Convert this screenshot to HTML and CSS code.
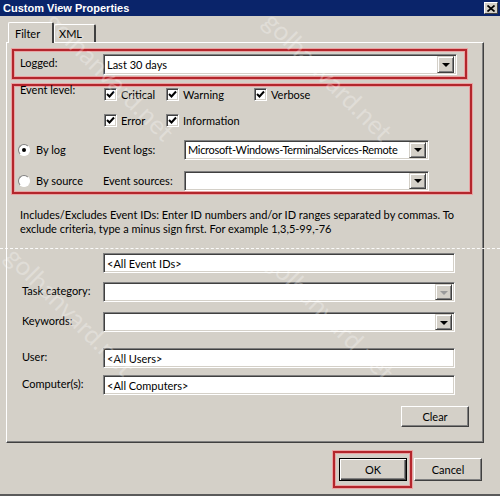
FILE: index.html
```html
<!DOCTYPE html>
<html>
<head>
<meta charset="utf-8">
<link rel="stylesheet" href="styles.css">
</head>
<body>
<div class="window">
  <div class="titlebar">
    <span class="title">Custom View Properties</span>
    <span class="close"><svg width="8" height="7" viewBox="0 0 8 7"><path d="M0.5 0.5 L7.5 6.5 M7.5 0.5 L0.5 6.5" stroke="#000" stroke-width="1.7"/></svg></span>
  </div>
  <div class="tabs">
    <div class="tab active">Filter</div>
    <div class="tab">XML</div>
  </div>
  <div class="panel">
    <div class="redbox logged">
      <span class="lbl-logged">Logged:</span>
      <div class="field combo w-logged"><span class="val">Last 30 days</span><span class="dd"><i class="tri"></i></span></div>
    </div>
    <div class="redbox events">
      <div class="erow">
        <span class="elabel">Event level:</span>
        <span class="chk w62"><span class="box"><svg width="9" height="9" viewBox="0 0 9 9"><path d="M1 4 L3.5 6.5 L8 1.5" fill="none" stroke="#000" stroke-width="2"/></svg></span>Critical</span>
        <span class="chk w88"><span class="box"><svg width="9" height="9" viewBox="0 0 9 9"><path d="M1 4 L3.5 6.5 L8 1.5" fill="none" stroke="#000" stroke-width="2"/></svg></span>Warning</span>
        <span class="chk"><span class="box"><svg width="9" height="9" viewBox="0 0 9 9"><path d="M1 4 L3.5 6.5 L8 1.5" fill="none" stroke="#000" stroke-width="2"/></svg></span>Verbose</span>
      </div>
      <div class="erow r2">
        <span class="elabel"></span>
        <span class="chk w62"><span class="box"><svg width="9" height="9" viewBox="0 0 9 9"><path d="M1 4 L3.5 6.5 L8 1.5" fill="none" stroke="#000" stroke-width="2"/></svg></span>Error</span>
        <span class="chk"><span class="box"><svg width="9" height="9" viewBox="0 0 9 9"><path d="M1 4 L3.5 6.5 L8 1.5" fill="none" stroke="#000" stroke-width="2"/></svg></span>Information</span>
      </div>
      <div class="lrow r3">
        <span class="radio-item"><span class="radio on"></span>By log</span>
        <span class="slabel">Event logs:</span>
        <div class="field combo w-log"><span class="val tight">Microsoft-Windows-TerminalServices-Remote</span><span class="dd"><i class="tri"></i></span></div>
      </div>
      <div class="lrow r4">
        <span class="radio-item"><span class="radio"></span>By source</span>
        <span class="slabel">Event sources:</span>
        <div class="field combo w-log"><span class="val"></span><span class="dd"><i class="tri"></i></span></div>
      </div>
    </div>
    <p class="help">Includes/Excludes Event IDs: Enter ID numbers and/or ID ranges separated by commas. To<br>exclude criteria, type a minus sign first. For example 1,3,5-99,-76</p>
    <div class="frow ids"><span class="flabel"></span><div class="field w-f"><span class="val">&lt;All Event IDs&gt;</span></div></div>
    <div class="frow task"><span class="flabel">Task category:</span><div class="field combo w-f"><span class="val"></span><span class="dd"><i class="tri dis"></i></span></div></div>
    <div class="frow kw"><span class="flabel">Keywords:</span><div class="field combo w-f"><span class="val"></span><span class="dd"><i class="tri"></i></span></div></div>
    <div class="frow user"><span class="flabel">User:</span><div class="field w-f"><span class="val">&lt;All Users&gt;</span></div></div>
    <div class="frow comp"><span class="flabel">Computer(s):</span><div class="field w-f"><span class="val">&lt;All Computers&gt;</span></div></div>
    <div class="clear-row"><span class="btn clear">Clear</span></div>
  </div>
  <div class="footer">
    <div class="okbox"><span class="btn ok">OK</span></div>
    <span class="btn cancel">Cancel</span>
  </div>
  <div class="dashline"></div>
  <div class="wm wm1">golhanvard.net</div>
  <div class="wm wm2">golhanvard.net</div>
  <div class="wm wm3">golhanvard.net</div>
  <div class="wm wm4">golhanvard.net</div>
</div>
</body>
</html>
```
FILE: styles.css
```css
html, body { margin: 0; padding: 0; }
body { width: 500px; height: 496px; overflow: hidden; background: #d4d0c8; }
.window {
  position: relative;
  width: 500px; height: 496px;
  box-sizing: border-box;
  background: #d4d0c8;
  border-bottom: 2px solid #5a5a5a;
  overflow: hidden;
  font-family: "Lato", "Open Sans", sans-serif;
  font-size: 11px;
  color: #000;
}
.titlebar {
  height: 16px;
  background: #0a246a;
  display: flex; align-items: center; justify-content: space-between;
  padding: 0 2px 0 3px;
}
.title { font-family: "Liberation Sans", sans-serif; font-weight: bold; font-size: 11px; color: #fff; }
.close {
  width: 14px; height: 12px; box-sizing: border-box;
  background: #d4d0c8;
  border-top: 1px solid #fff; border-left: 1px solid #fff;
  border-right: 1px solid #404040; border-bottom: 1px solid #404040;
  display: flex; align-items: center; justify-content: center;
}
.tabs { height: 26px; display: flex; align-items: flex-end; padding-left: 8px; position: relative; z-index: 2; }
.tab {
  box-sizing: border-box; height: 18px; padding: 0 10px 0 6px;
  border-top: 1px solid #fff; border-left: 1px solid #fff; border-right: 2px solid #404040;
  display: flex; align-items: center; line-height: 1;
  border-radius: 2px 2px 0 0;
}
.tab.active { height: 21px; margin-bottom: -1px; width: 46px; background: #d4d0c8; }
.tab:not(.active) { width: 42px; padding-left: 4px; }
.panel {
  margin-left: 6px; width: 478px; height: 401px; box-sizing: border-box;
  border-top: 1px solid #fff; border-left: 1px solid #fff;
  border-right: 1px solid #404040; border-bottom: 1px solid #404040;
  box-shadow: inset -1px -1px 0 #808080;
  padding: 6px 0 0 5px;
  display: flex; flex-direction: column;
}
.redbox { box-sizing: border-box; border: 2px solid #b3262c; box-shadow: 0 0 0 1px #e9a3a3, inset 0 0 0 1px #e9a3a3; }
.logged { width: 455px; height: 30px; display: flex; align-items: center; padding-left: 6px; }
.lbl-logged { width: 83px; margin-top: -4px; }
.field {
  box-sizing: border-box; height: 21px; background: #fff;
  border-top: 1px solid #808080; border-left: 1px solid #808080;
  border-right: 1px solid #fff; border-bottom: 1px solid #fff;
  box-shadow: inset 1px 1px 0 #404040, inset -1px -1px 0 #d4d0c8;
  display: flex; align-items: center; padding: 0 2px 0 3px;
  overflow: hidden;
}
.val { flex: 1; white-space: nowrap; overflow: hidden; }
.val.tight { letter-spacing: -0.3px; }
.w-logged { width: 354px; }
.w-log { width: 245px; height: 20px; }
.w-f { width: 352px; height: 20px; }
.dd {
  width: 17px; height: 17px; box-sizing: border-box; flex: none;
  background: #d4d0c8;
  border-top: 1px solid #d4d0c8; border-left: 1px solid #d4d0c8;
  border-right: 1px solid #404040; border-bottom: 1px solid #404040;
  box-shadow: inset 1px 1px 0 #fff, inset -1px -1px 0 #808080;
  display: flex; align-items: center; justify-content: center;
}
.w-log .dd, .w-f .dd { height: 16px; }
.tri { width: 0; height: 0; border-left: 4px solid transparent; border-right: 4px solid transparent; border-top: 4px solid #000; margin-top: 1px; }
.tri.dis { border-top-color: #9a9a9a; }
.events { width: 460px; height: 110px; margin-top: 5px; display: flex; flex-direction: column; padding: 0 0 1px 6px; }
.erow { height: 16px; display: flex; align-items: center; }
.erow.r2 { margin-top: 10px; }
.elabel { width: 84px; align-self: flex-start; margin-top: -3px; }
.chk { display: flex; align-items: center; }
.w62 { width: 62px; }
.w88 { width: 88px; }
.box {
  width: 13px; height: 13px; box-sizing: border-box; background: #fff; margin-right: 4px;
  border-top: 1px solid #808080; border-left: 1px solid #808080;
  border-right: 1px solid #fff; border-bottom: 1px solid #fff;
  box-shadow: inset 1px 1px 0 #404040, inset -1px -1px 0 #d4d0c8;
  display: flex; align-items: center; justify-content: center;
}
.lrow { height: 21px; display: flex; align-items: center; margin-left: -2px; }
.lrow.r3 { margin-top: 11px; }
.lrow.r4 { margin-top: 10px; }
.radio-item { width: 85px; display: flex; align-items: center; }
.radio {
  width: 12px; height: 12px; box-sizing: border-box; border-radius: 50%; background: #fff; margin-right: 6px;
  border-top: 1px solid #808080; border-left: 1px solid #808080;
  border-right: 1px solid #fff; border-bottom: 1px solid #fff;
  position: relative;
}
.radio.on::after { content: ""; position: absolute; left: 3px; top: 3px; width: 4px; height: 4px; border-radius: 50%; background: #000; }
.slabel { width: 81px; }
.help { margin: 14px 0 0 8px; line-height: 14px; white-space: nowrap; }
.frow { display: flex; align-items: center; }
.flabel { padding-left: 10px; box-sizing: border-box; width: 91px; margin-top: -4px; }
.ids { margin-top: 17px; }
.task { margin-top: 9px; }
.kw { margin-top: 10px; }
.user { margin-top: 16px; }
.comp { margin-top: 7px; }
.clear-row { display: flex; justify-content: flex-end; margin-top: 11px; padding-right: 14px; }
.btn {
  box-sizing: border-box; width: 68px; height: 21px; background: #d4d0c8;
  border-top: 1px solid #fff; border-left: 1px solid #fff;
  border-right: 1px solid #404040; border-bottom: 1px solid #404040;
  box-shadow: inset -1px -1px 0 #808080;
  display: flex; align-items: center; justify-content: center;
}
.footer { display: flex; justify-content: flex-end; padding: 8px 18px 0 0; align-items: center; }
.okbox { border: 2px solid #b3262c; box-shadow: 0 0 0 1px #e9a3a3, inset 0 0 0 1px #e9a3a3; padding: 5px 3px 5px 4px; }
.btn.ok, .btn.cancel { height: 23px; }
.btn.ok { border: 1px solid #000; box-shadow: inset 1px 1px 0 #fff, inset -1px -1px 0 #404040, inset -2px -2px 0 #808080; }
.cancel { margin-left: 2px; }
.dashline { position: absolute; left: 0; top: 248px; width: 500px; border-top: 1px dashed rgba(255,255,255,0.9); }
.wm {
  position: absolute; font-family: "Lato", sans-serif; font-size: 26px; color: rgba(255,255,255,0.28);
  transform-origin: 0 0; transform: rotate(45deg); white-space: nowrap; pointer-events: none;
}
.wm1 { left: 62px; top: 5px; }
.wm2 { left: 280px; top: 5px; }
.wm3 { left: 22px; top: 240px; }
.wm4 { left: 282px; top: 245px; }
```
